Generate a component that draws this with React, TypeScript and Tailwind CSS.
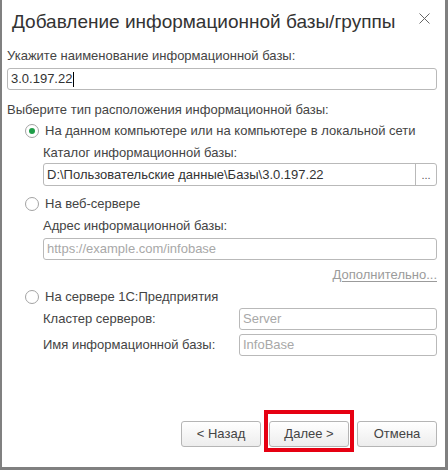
import React from "react";

const font = { fontFamily: '"Liberation Sans", Arial, sans-serif' };

function Radio({ checked, label }: { checked?: boolean; label: string }) {
  return (
    <div className="flex items-center h-[16px] ml-[18px]">
      <span className="w-[14px] h-[14px] rounded-full border border-[#a3a3a3] bg-white flex items-center justify-center shrink-0">
        {checked && <span className="w-[6px] h-[6px] rounded-full bg-[#1f9d48]" />}
      </span>
      <span className="ml-[6px] text-[13px] leading-[16px] text-[#444]">{label}</span>
    </div>
  );
}

export default function App() {
  return (
    <div
      style={font}
      className="relative w-[448px] h-[470px] bg-white border-l-2 border-r-[3px] border-b-[3px] border-[#808080] flex flex-col"
    >
      {/* title */}
      <div className="flex items-start pt-[11px] pl-[10px] pr-[15px] h-[33px]">
        <span className="text-[19px] leading-[22px] text-[#333] flex-1">
          Добавление информационной базы/группы
        </span>
        <svg width="11" height="11" viewBox="0 0 11 11" className="mt-[2px]">
          <path d="M0.5 0.5 L10.5 10.5 M10.5 0.5 L0.5 10.5" stroke="#666" strokeWidth="1" />
        </svg>
      </div>

      <div className="flex flex-col pl-[5px] pr-[8px] text-[13px] leading-[16px] text-[#444]">
        <div className="mt-[15px]">Укажите наименование информационной базы:</div>
        <div className="mt-[4px] h-[22px] border border-[#b9b9b9] rounded-[3px] flex items-center pl-[3px] text-[#333]">
          <span>3.0.197.22</span>
          <span className="w-px h-[15px] bg-black ml-px" />
        </div>

        <div className="mt-[12px]">Выберите тип расположения информационной базы:</div>

        <div className="mt-[5px]">
          <Radio checked label="На данном компьютере или на компьютере в локальной сети" />
        </div>
        <div className="ml-[36px] flex flex-col">
          <div className="mt-[6px]">Каталог информационной базы:</div>
          <div className="mt-[2px] h-[23px] border border-[#b9b9b9] rounded-[3px] flex items-stretch text-[#333]">
            <span className="flex-1 flex items-center pl-[3px]">D:\Пользовательские данные\Базы\3.0.197.22</span>
            <span className="w-[21px] border-l border-[#b9b9b9] flex items-center justify-center text-[11px] text-[#555]">...</span>
          </div>
        </div>

        <div className="mt-[10px]">
          <Radio label="На веб-сервере" />
        </div>
        <div className="ml-[36px] flex flex-col">
          <div className="mt-[6px]">Адрес информационной базы:</div>
          <div className="mt-[4px] h-[22px] border border-[#b9b9b9] rounded-[3px] flex items-center pl-[3px] text-[#a8a8a8]">
            https://example.com/infobase
          </div>
          <div className="mt-[7px] flex justify-end">
            <span className="underline text-[#9b9b9b] underline-offset-2">Дополнительно...</span>
          </div>
        </div>

        <div className="mt-[6px]">
          <Radio label="На сервере 1С:Предприятия" />
        </div>
        <div className="ml-[36px] flex flex-col">
          <div className="mt-[3px] flex items-center">
            <span className="w-[196px]">Кластер серверов:</span>
            <div className="flex-1 h-[22px] border border-[#b9b9b9] rounded-[3px] flex items-center pl-[3px] text-[#a8a8a8]">
              Server
            </div>
          </div>
          <div className="mt-[4px] flex items-center">
            <span className="w-[196px]">Имя информационной базы:</span>
            <div className="flex-1 h-[22px] border border-[#b9b9b9] rounded-[3px] flex items-center pl-[3px] text-[#a8a8a8]">
              InfoBase
            </div>
          </div>
        </div>
      </div>

      <div className="flex-1" />

      <div className="flex justify-end gap-[8px] pr-[8px] pb-[20px]">
        {["< Назад", "Далее >", "Отмена"].map((t) => (
          <button
            key={t}
            className="w-[80px] h-[26px] border border-[#b5b5b5] rounded-[3px] bg-gradient-to-b from-white to-[#ededed] text-[13px] text-[#444] flex items-center justify-center"
          >
            {t}
          </button>
        ))}
      </div>

      {/* red annotation frame */}
      <div className="absolute left-[262px] top-[410px] w-[90px] h-[42px] border-[4px] border-[#e60012] pointer-events-none" />
    </div>
  );
}
